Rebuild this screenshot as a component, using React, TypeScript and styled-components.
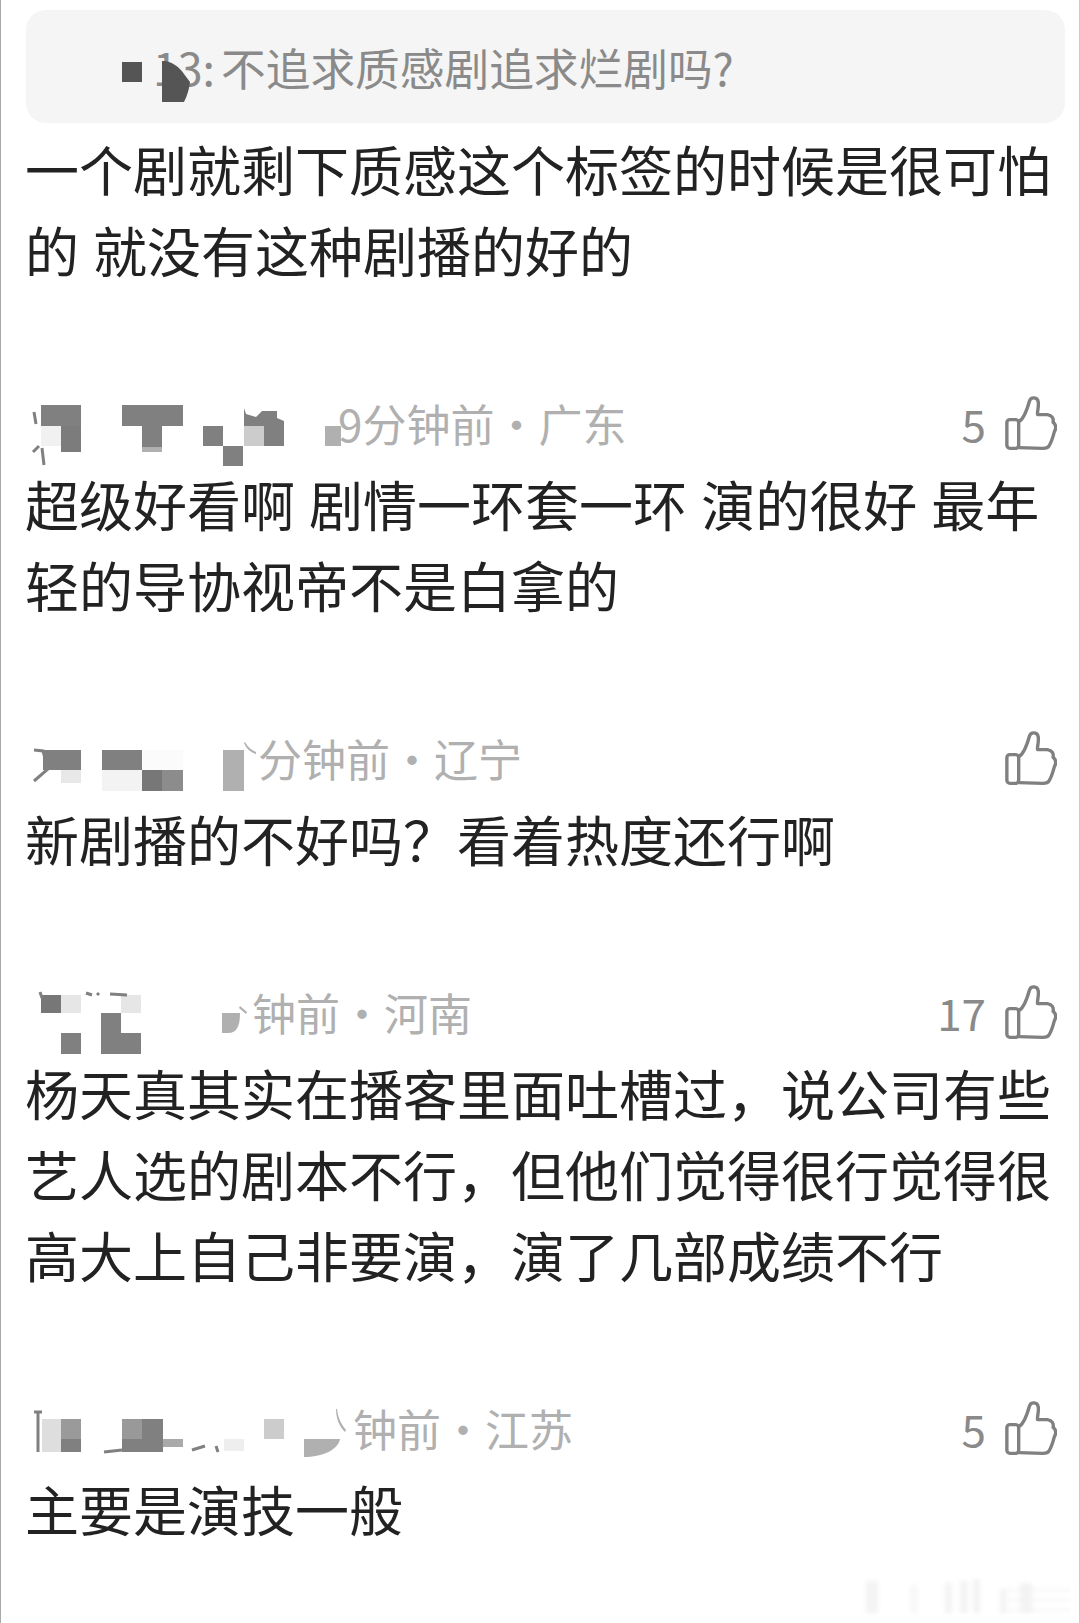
import React from 'react';
import styled, { createGlobalStyle } from 'styled-components';

type Tile = [number, number, number, number, string];

interface MosaicData {
    top: number;
    width: number;
    tiles: Tile[];
    strokes?: string[];
    fills?: [string, string][];
}

interface CommentData {
    mosaic: MosaicData;
    time: string;
    region: string;
    likes?: string;
    text: string;
}

const comments: CommentData[] = [
    {
        mosaic: {
            top: 382,
            width: 313,
            tiles: [
                [41, 405, 40, 21, '#808080'],
                [61, 426, 20, 26, '#7c7c7c'],
                [41, 426, 20, 20, '#f1f1f1'],
                [122, 405, 61, 21, '#808080'],
                [142, 426, 20, 21, '#808080'],
                [142, 447, 20, 5, '#b0b0b0'],
                [203, 426, 20, 20, '#808080'],
                [223, 446, 20, 20, '#808080'],
                [244, 426, 20, 20, '#cccccc'],
                [264, 426, 20, 20, '#808080'],
                [325, 426, 16, 20, '#b0b0b0'],
            ],
            strokes: ['M34 412 L36 424', 'M39 446 L33 452 M42 448 L44 465'],
            fills: [['M244 408 L246 414 L256 417 L262 411 L277 411 L277 418 L284 421 L284 426 L244 426 Z', '#808080']],
        },
        time: '9分钟前',
        region: '广东',
        likes: '5',
        text: '超级好看啊 剧情一环套一环 演的很好 最年轻的导协视帝不是白拿的',
    },
    {
        mosaic: {
            top: 717,
            width: 233,
            tiles: [
                [43, 750, 38, 20, '#808080'],
                [61, 770, 20, 13, '#e8e8e8'],
                [102, 750, 40, 20, '#808080'],
                [142, 750, 41, 20, '#fbfbfb'],
                [102, 770, 40, 21, '#f3f3f3'],
                [142, 770, 20, 21, '#777777'],
                [162, 770, 21, 21, '#8c8c8c'],
                [223, 750, 21, 41, '#b0b0b0'],
            ],
            strokes: ['M34 750 L43 751 L48 769 L34 781'],
            fills: [['M245 742 C248 747 251 750 256 752 L256 754 C250 752 246 748 244 743 Z', '#b0b0b0']],
        },
        time: '分钟前',
        region: '辽宁',
        text: '新剧播的不好吗？看着热度还行啊',
    },
    {
        mosaic: {
            top: 971,
            width: 227,
            tiles: [
                [41, 995, 20, 18, '#777777'],
                [61, 995, 20, 18, '#e6e6e6'],
                [121, 995, 20, 18, '#e6e6e6'],
                [101, 1013, 20, 41, '#808080'],
                [121, 1033, 20, 21, '#808080'],
                [61, 1033, 20, 21, '#808080'],
            ],
            strokes: ['M86 993 L92 995', 'M97 993 L99 995', 'M110 994 L127 995', 'M40 992 L42 998'],
            fills: [
                ['M222 1013 L240 1013 C240 1024 238 1033 228 1033 L222 1033 Z', '#b0b0b0'],
                ['M240 1006 L247 1012 L246 1014 L239 1008 Z', '#b0b0b0'],
            ],
        },
        time: '钟前',
        region: '河南',
        likes: '17',
        text: '杨天真其实在播客里面吐槽过，说公司有些艺人选的剧本不行，但他们觉得很行觉得很高大上自己非要演，演了几部成绩不行',
    },
    {
        mosaic: {
            top: 1387,
            width: 328,
            tiles: [
                [42, 1419, 19, 33, '#dedede'],
                [61, 1419, 20, 20, '#9a9a9a'],
                [61, 1439, 20, 13, '#808080'],
                [122, 1419, 20, 20, '#999999'],
                [142, 1419, 21, 20, '#808080'],
                [122, 1439, 41, 13, '#808080'],
                [163, 1439, 20, 8, '#aaaaaa'],
                [224, 1439, 20, 12, '#eeeeee'],
                [264, 1419, 20, 20, '#cccccc'],
            ],
            strokes: ['M34 1412 L42 1412 M38 1412 L38 1452', 'M104 1452 L122 1450', 'M192 1450 L205 1446 M216 1446 L218 1452'],
            fills: [
                ['M304 1439 L340 1439 C338 1450 322 1457 304 1457 Z', '#b0b0b0'],
                ['M337 1409 C338 1418 341 1424 346 1430 L345 1432 C339 1426 336 1418 336 1409 Z', '#b0b0b0'],
            ],
        },
        time: '钟前',
        region: '江苏',
        likes: '5',
        text: '主要是演技一般',
    },
];

const ThumbIcon = () => (
    <Thumb viewBox="0 0 153 160" fill="none" stroke="#808080" strokeWidth="10" strokeLinejoin="round" strokeLinecap="round">
        <rect x="5" y="70" width="35" height="85" rx="9" />
        <path d="M40 76 C55 70 65 40 72 15 C76 2 96 2 98 18 C100 35 94 48 96 55 L125 55 C140 57 144 68 142 78 C150 85 152 95 146 105 C142 120 135 140 130 148 C126 155 118 155 112 155 L40 153" />
    </Thumb>
);

const Mosaic = ({ data }: { data: MosaicData }) => (
    <MosaicSvg $width={data.width} viewBox={`25 ${data.top} ${data.width} 81`}>
        {data.tiles.map(([x, y, w, h, color]) => (
            <rect key={`${x}-${y}`} x={x} y={y} width={w} height={h} fill={color} />
        ))}
        {data.fills?.map(([d, color]) => <path key={d} d={d} fill={color} />)}
        {data.strokes?.map((d) => <path key={d} d={d} fill="none" stroke="#808080" strokeWidth="3" />)}
    </MosaicSvg>
);

function App() {
    return (
        <Page>
            <GlobalStyle />
            <QuoteBox>
                <QuoteText>13: 不追求质感剧追求烂剧吗?</QuoteText>
                <QuoteMask viewBox="0 0 70 44">
                    <rect x="0" y="4" width="20" height="20" fill="#555555" />
                    <path d="M40 3 L44 3 C52 5 58 10 62 16 L68 24 C67 32 65 38 62 44 L40 44 Z" fill="#555555" />
                </QuoteMask>
            </QuoteBox>
            <CommentText>一个剧就剩下质感这个标签的时候是很可怕的 就没有这种剧播的好的</CommentText>
            {comments.map((comment) => (
                <Comment key={comment.region}>
                    <MetaRow>
                        <Mosaic data={comment.mosaic} />
                        <MetaText>
                            {comment.time}
                            <span>·</span>
                            {comment.region}
                        </MetaText>
                        <Likes>
                            {comment.likes && <LikeCount>{comment.likes}</LikeCount>}
                            <ThumbIcon />
                        </Likes>
                    </MetaRow>
                    <CommentText>{comment.text}</CommentText>
                </Comment>
            ))}
            <Watermark viewBox="0 0 215 40">
                <defs>
                    <filter id="soft">
                        <feGaussianBlur stdDeviation="2" />
                    </filter>
                </defs>
                <g filter="url(#soft)" fill="#f3f3f3">
                    <rect x="6" y="4" width="12" height="32" />
                    <rect x="50" y="8" width="8" height="28" fill="#f8f8f8" />
                    <rect x="85" y="6" width="7" height="30" />
                    <rect x="100" y="4" width="8" height="32" />
                    <rect x="113" y="2" width="7" height="34" />
                    <rect x="140" y="12" width="6" height="24" />
                    <rect x="160" y="6" width="12" height="30" />
                    <rect x="140" y="12" width="70" height="2" />
                    <rect x="140" y="22" width="70" height="2" />
                    <rect x="140" y="32" width="70" height="2" />
                </g>
            </Watermark>
        </Page>
    );
}

const GlobalStyle = createGlobalStyle`
    html, body {
        margin: 0;
        padding: 0;
        background: #ffffff;
    }
`;

const Page = styled.div`
    position: relative;
    box-sizing: border-box;
    width: 1080px;
    height: 1623px;
    overflow: hidden;
    padding: 10px 14px 0 24px;
    background: #ffffff;
    border-left: 1px solid #aaaaaa;
    border-right: 1px solid #cccccc;
    font-family: "Noto Sans CJK SC", "Noto Sans", sans-serif;
`;

const QuoteBox = styled.div`
    position: relative;
    box-sizing: border-box;
    width: 1039px;
    margin-left: 1px;
    height: 113px;
    padding-left: 127px;
    display: flex;
    align-items: center;
    background: #f5f5f5;
    border-radius: 20px;
`;

const QuoteText = styled.div`
    font-size: 44.7px;
    line-height: 60px;
    color: #8a8a8a;
    word-spacing: -4px;
`;

const QuoteMask = styled.svg`
    position: absolute;
    left: 96px;
    top: 48px;
    width: 70px;
    height: 44px;
`;

const CommentText = styled.div`
    width: 1034px;
    margin-top: 5px;
    font-size: 54px;
    line-height: 81px;
    word-spacing: 2px;
    color: #222222;
`;

const Comment = styled.div`
    margin-top: 92px;

    ${CommentText} {
        margin-top: 0;
    }
`;

const MetaRow = styled.div`
    display: flex;
    align-items: center;
    height: 81px;
`;

const MosaicSvg = styled.svg<{ $width: number }>`
    flex: none;
    width: ${(p) => p.$width}px;
    height: 81px;
    overflow: visible;
`;

const MetaText = styled.div`
    font-size: 44px;
    line-height: 60px;
    color: #b0b0b0;
`;

const Likes = styled.div`
    margin-left: auto;
    display: flex;
    align-items: center;
    gap: 19px;
    padding-right: 8px;
`;

const LikeCount = styled.span`
    font-size: 44px;
    line-height: 60px;
    color: #8a8a8a;
`;

const Thumb = styled.svg`
    width: 52px;
    height: 54px;
`;

const Watermark = styled.svg`
    position: absolute;
    left: 859px;
    top: 1577px;
    width: 215px;
    height: 40px;
`;

export default App;
